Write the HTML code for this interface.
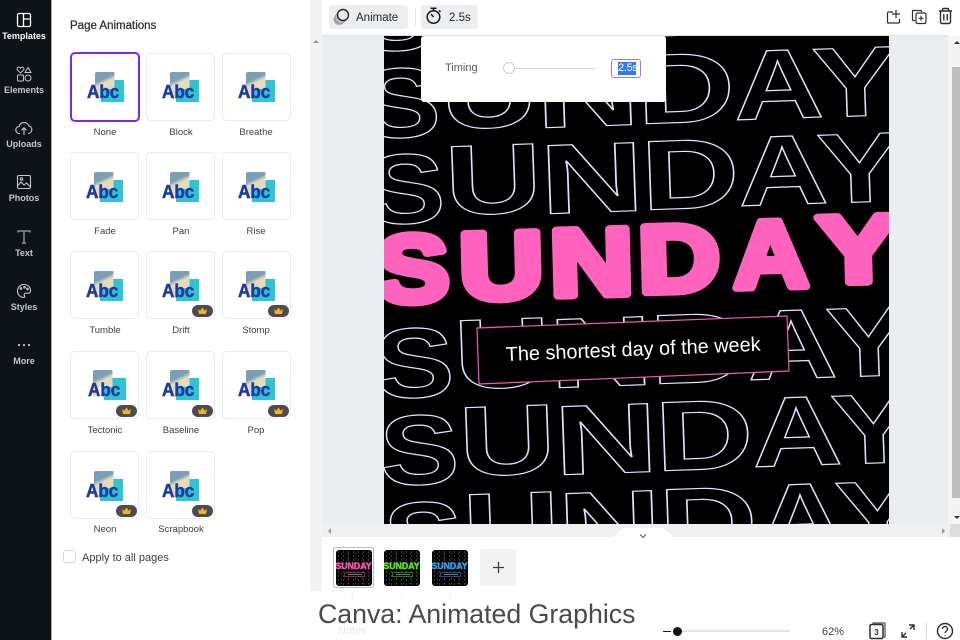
<!DOCTYPE html>
<html lang="en">
<head>
<meta charset="utf-8">
<title>Canva: Animated Graphics</title>
<style>
*{box-sizing:border-box}
html,body{margin:0;padding:0}
body{width:960px;height:640px;overflow:hidden;position:relative;background:#fff;font-family:"Liberation Sans",sans-serif;color:#24282e}
.abs{position:absolute}
#side{left:0;top:0;width:52px;height:640px;background:#0e1318;border-right:1px solid #a9a9a9}
.nav{position:absolute;left:0;width:48px;text-align:center;font-size:9px;font-weight:bold;color:#c4c7ca;line-height:11px;white-space:nowrap}
.nav svg{display:block;margin:0 auto 3px}
.card{position:absolute;width:69px;height:68px;border:1.5px solid #ebebed;border-radius:5px;background:#fff}
.card.sel{border:2px solid #7d2ae8}
.lbl{position:absolute;width:84px;text-align:center;font-size:9.5px;color:#3c4046;line-height:12px}
.pic{position:absolute;left:23px;top:17.5px;width:19.5px;height:27px;border-radius:2px;background:linear-gradient(155deg,#7b9fb7 0 30%,#e6dcb9 42% 100%);clip-path:polygon(0 0,100% 0,100% 65%,30% 65%,30% 100%,0 100%)}
.teal{position:absolute;left:29px;top:25.5px;width:22.500px;height:22.500px;background:#2fc4d2}
.abc{position:absolute;left:14.500px;top:28.300px;font-size:18px;font-weight:bold;color:#1a3aa5;line-height:20px;-webkit-text-stroke:.5px #1a3aa5;transform:scaleX(.95);transform-origin:0 0}
.d .pic,.d .teal,.d .abc{margin-top:1px}
.pill{position:absolute;right:1.500px;bottom:1.500px;width:21px;height:12px;border-radius:6px;background:#4c4c50}
.pill svg{position:absolute;left:5px;top:2px}
.thumb{position:absolute;top:550px;width:36px;height:36px;border-radius:3px;background-color:#050505;background-image:radial-gradient(circle,#6f6f6f 0 .5px,transparent .7px),radial-gradient(circle,#555 0 .45px,transparent .7px);background-size:5px 4px,7px 5px;background-position:0 0,2px 1px;overflow:hidden;text-align:center}
.thumb b{position:absolute;left:-1px;width:38px;top:12px;font-size:8.8px;line-height:9px;font-weight:bold;-webkit-text-stroke:.45px currentColor}
.thumb i{position:absolute;left:8px;top:22px;width:21px;height:5px;background:#000;border:.5px solid currentColor;opacity:.75}
.thumb i:after{content:"";position:absolute;left:3px;top:1.300px;width:14px;height:1px;background:#999}
.num{position:absolute;top:591px;font-size:9px;color:#eef0f2}
</style>
</head>
<body>

<div class="abs" style="left:310px;top:0;width:12px;height:591px;background:#f3f3f3"></div>
<div class="abs" style="left:322px;top:0;width:638px;height:35px;background:#fff"></div>
<div class="abs" style="left:322px;top:35px;width:626px;height:489px;background:#ebeef1;border-top:1px solid #dfe1e3"></div>

<svg class="abs" style="left:384px;top:36px" width="505" height="488" viewBox="384 36 505 488">
<rect x="384" y="36" width="505" height="488" fill="#000"/>
<g font-family="Liberation Sans" font-weight="bold" font-size="99" fill="none" stroke="#e6e0ff" stroke-width="1.2">
<g transform="translate(-9,-173)" aria-label="SUNDAY">
<text transform="translate(367,224.500) rotate(-2) scale(1.2,1)">S</text><text transform="translate(446,215) rotate(-2) scale(1.36,1)">U</text><text transform="translate(541,214) rotate(-2) scale(1.46,1)">N</text><text transform="translate(642,210) rotate(-2) scale(1.38,1)">D</text><text transform="translate(739,206) rotate(-2) scale(1.26,1)">A</text><text transform="translate(818,203.500) rotate(-2) scale(1.3,1)">Y</text>
</g>
<g transform="translate(-4.5,-86)" aria-label="SUNDAY">
<text transform="translate(367,224.500) rotate(-2) scale(1.2,1)">S</text><text transform="translate(446,215) rotate(-2) scale(1.36,1)">U</text><text transform="translate(541,214) rotate(-2) scale(1.46,1)">N</text><text transform="translate(642,210) rotate(-2) scale(1.38,1)">D</text><text transform="translate(739,206) rotate(-2) scale(1.26,1)">A</text><text transform="translate(818,203.500) rotate(-2) scale(1.3,1)">Y</text>
</g>
<g aria-label="SUNDAY">
<text transform="translate(367,224.500) rotate(-2) scale(1.2,1)">S</text><text transform="translate(446,215) rotate(-2) scale(1.36,1)">U</text><text transform="translate(541,214) rotate(-2) scale(1.46,1)">N</text><text transform="translate(642,210) rotate(-2) scale(1.38,1)">D</text><text transform="translate(739,206) rotate(-2) scale(1.26,1)">A</text><text transform="translate(818,203.500) rotate(-2) scale(1.3,1)">Y</text>
</g>
<g transform="translate(9,174)" aria-label="SUNDAY">
<text transform="translate(367,224.500) rotate(-2) scale(1.2,1)">S</text><text transform="translate(446,215) rotate(-2) scale(1.36,1)">U</text><text transform="translate(541,214) rotate(-2) scale(1.46,1)">N</text><text transform="translate(642,210) rotate(-2) scale(1.38,1)">D</text><text transform="translate(739,206) rotate(-2) scale(1.26,1)">A</text><text transform="translate(818,203.500) rotate(-2) scale(1.3,1)">Y</text>
</g>
<g transform="translate(14,261)" aria-label="SUNDAY">
<text transform="translate(367,224.500) rotate(-2) scale(1.2,1)">S</text><text transform="translate(446,215) rotate(-2) scale(1.36,1)">U</text><text transform="translate(541,214) rotate(-2) scale(1.46,1)">N</text><text transform="translate(642,210) rotate(-2) scale(1.38,1)">D</text><text transform="translate(739,206) rotate(-2) scale(1.26,1)">A</text><text transform="translate(818,203.500) rotate(-2) scale(1.3,1)">Y</text>
</g>
<g transform="translate(18,348)" aria-label="SUNDAY">
<text transform="translate(367,224.500) rotate(-2) scale(1.2,1)">S</text><text transform="translate(446,215) rotate(-2) scale(1.36,1)">U</text><text transform="translate(541,214) rotate(-2) scale(1.46,1)">N</text><text transform="translate(642,210) rotate(-2) scale(1.38,1)">D</text><text transform="translate(739,206) rotate(-2) scale(1.26,1)">A</text><text transform="translate(818,203.500) rotate(-2) scale(1.3,1)">Y</text>
</g>
</g>
<g font-family="Liberation Sans" font-weight="bold" font-size="95" fill="#ff63bd" stroke="#ff63bd" stroke-width="8" stroke-linejoin="round" aria-label="SUNDAY">
<text transform="translate(377,302.5) rotate(-1.5) scale(1.15,1)">S</text><text transform="translate(460,299.5) rotate(-1.5) scale(1.23,1)">U</text><text transform="translate(550.6,296) rotate(-1.5) scale(1.22,1)">N</text><text transform="translate(639,292.500) rotate(-1.5) scale(1.19,1)">D</text><text transform="translate(734,288) rotate(-1.5) scale(1.09,1)">A</text><text transform="translate(818,283) rotate(-1.5) scale(1.29,1)">Y</text>
</g>
<polygon points="477,328 787,316 789,371 479,384" fill="#000" stroke="#f05bb4" stroke-width="1.2"/>
<text x="506" y="361" transform="rotate(-2.3 506 361)" font-family="Liberation Sans" font-size="20" fill="#fff" textLength="255" lengthAdjust="spacingAndGlyphs">The shortest day of the week</text>
</svg>

<!-- popover -->
<div class="abs" style="left:421px;top:36px;width:245px;height:66px;background:#fff;border-radius:3px"></div>
<div class="abs" style="left:445px;top:61px;font-size:11px;line-height:14px;color:#55585c">Timing</div>
<div class="abs" style="left:503px;top:67.500px;width:93px;height:1px;background:#d9d3e2"></div>
<div class="abs" style="left:503px;top:62px;width:12px;height:12px;border-radius:50%;background:#fff;border:1px solid #cfcfd4"></div>
<div class="abs" style="left:611px;top:59px;width:30px;height:19px;border:1.500px solid #a675f0;border-radius:3px;background:#fff"></div>
<div class="abs" style="left:618px;top:62px;width:18px;height:13px;background:#2f7bf0;color:#fff;font-size:11px;line-height:13px;letter-spacing:-.3px;white-space:nowrap">2.5s</div>

<!-- top toolbar -->
<div class="abs" style="left:329px;top:5px;width:79px;height:24px;background:#eceef0;border-radius:3px"></div>
<svg class="abs" style="left:332px;top:7px" width="20" height="20" viewBox="0 0 20 20" fill="none"><circle cx="7" cy="12.500" r="5.500" fill="#a9a9a9"/><circle cx="8.500" cy="11" r="5.500" fill="#bdbdbd" stroke="#8c8c8c" stroke-width=".7"/><circle cx="11" cy="8" r="5.500" fill="#eceef0" stroke="#24282e" stroke-width="1.400"/></svg>
<div class="abs" style="left:356px;top:11px;font-size:11.500px;line-height:14px;color:#24282e">Animate</div>
<div class="abs" style="left:415px;top:8px;width:1px;height:18px;background:#e6e6e8"></div>
<div class="abs" style="left:421px;top:5px;width:57px;height:24px;background:#eceef0;border-radius:3px"></div>
<svg class="abs" style="left:424px;top:6px" width="20" height="20" viewBox="0 0 20 20" fill="none" stroke="#15181c" stroke-width="1.500"><circle cx="9.500" cy="11" r="6.300"/><path d="M6.500 2.200h6M9.500 2.200v2.500M9.500 11l-2.500-3M15 4.500l1.500 1.500"/></svg>
<div class="abs" style="left:449px;top:11px;font-size:11.500px;line-height:14px;color:#24282e">2.5s</div>
<svg class="abs" style="left:885px;top:6px" width="70" height="20" viewBox="0 0 70 20" fill="none" stroke="#2a2e34" stroke-width="1.200"><path d="M8 6H3.500a1 1 0 0 0-1 1v9a1 1 0 0 0 1 1h10a1 1 0 0 0 1-1v-3"/><path d="M11 4v8M7 8h8"/><path d="M30 14.500h-1.500a1 1 0 0 1-1-1v-8a1 1 0 0 1 1-1h7a1 1 0 0 1 1 1V6"/><rect x="31" y="7" width="10" height="10.500" rx="1.500"/><path d="M36 9.800v5M33.500 12.300h5" stroke-width="1.100"/><path d="M54 5h13M57.500 5V3.500a1 1 0 0 1 1-1h4a1 1 0 0 1 1 1V5M55.500 5v11a1.500 1.500 0 0 0 1.500 1.500h7a1.500 1.500 0 0 0 1.500-1.500V5M58.800 8v6.500M62.200 8v6.500" stroke-width="1.400"/></svg>

<!-- right scrollbar -->
<div class="abs" style="left:948px;top:36px;width:12px;height:488px;background:#f4f4f4"></div>
<div class="abs" style="left:952px;top:67px;width:8px;height:431px;background:#bdbdbd"></div>
<div class="abs" style="left:953.500px;top:41px;width:0;height:0;border-left:3px solid transparent;border-right:3px solid transparent;border-bottom:3px solid #333"></div>
<div class="abs" style="left:953.500px;top:516px;width:0;height:0;border-left:3px solid transparent;border-right:3px solid transparent;border-top:3px solid #333"></div>
<div class="abs" style="left:313px;top:40px;width:0;height:0;border-left:3px solid transparent;border-right:3px solid transparent;border-bottom:3px solid #999"></div>

<!-- bottom scrollbar and thumb band -->
<div class="abs" style="left:322px;top:524px;width:638px;height:13px;background:#f0f0f0"></div>
<div class="abs" style="left:322px;top:537px;width:638px;height:54px;background:#fff"></div>
<div class="abs" style="left:950px;top:524px;width:10px;height:13px;background:#dcdcdc"></div>
<svg class="abs" style="left:610px;top:524px" width="68" height="14" viewBox="0 0 68 14"><path d="M0 14C6 14 8 4 16 4H50C58 4 60 14 68 14Z" fill="#fff"/></svg>
<div class="abs" style="left:328px;top:528px;width:0;height:0;border-top:3px solid transparent;border-bottom:3px solid transparent;border-right:3px solid #999"></div>
<div class="abs" style="left:942px;top:528px;width:0;height:0;border-top:3px solid transparent;border-bottom:3px solid transparent;border-left:3px solid #999"></div>
<svg class="abs" style="left:639px;top:533px" width="8" height="6" viewBox="0 0 8 6" fill="none" stroke="#555" stroke-width="1"><path d="M1 1.500l3 3 3-3"/></svg>

<div class="abs" style="left:333px;top:547px;width:41px;height:41px;border:1.500px solid #b7b9bd;border-radius:3px;background:#fff"></div>
<div class="thumb" style="left:335.500px"><b style="color:#ff4fb8">SUNDAY</b><i style="color:#a5367c"></i></div>
<div class="thumb" style="left:383.500px"><b style="color:#5ae614">SUNDAY</b><i style="color:#3c9a10"></i></div>
<div class="thumb" style="left:431.500px"><b style="color:#2f9cf0">SUNDAY</b><i style="color:#2765b5"></i></div>
<div class="abs" style="left:480px;top:549px;width:36px;height:37px;background:#f2f2f3;border-radius:3px"></div>
<svg class="abs" style="left:491px;top:560px" width="15" height="15" viewBox="0 0 15 15" stroke="#3a3e44" stroke-width="1.300"><path d="M7.500 2v11M2 7.500h11"/></svg>

<!-- bottom band -->
<div class="abs" style="left:310px;top:591px;width:650px;height:49px;background:#fff"></div>
<div class="num" style="left:350px">1</div>
<div class="num" style="left:399px">2</div>
<div class="num" style="left:447px">3</div>
<div class="abs" style="left:338px;top:624px;font-size:11px;line-height:14px;color:#e6e8eb">Notes</div>
<div class="abs" style="left:318px;top:597px;font-size:26.700px;line-height:34px;color:#4a4a4a;white-space:nowrap">Canva: Animated Graphics</div>

<div class="abs" style="left:663px;top:630.500px;width:8px;height:1.500px;background:#15181c"></div>
<div class="abs" style="left:676px;top:630px;width:114px;height:2px;background:#e4e4ea"></div>
<div class="abs" style="left:672.500px;top:627px;width:9px;height:9px;border-radius:50%;background:#0e1318"></div>
<div class="abs" style="left:822px;top:625px;font-size:11px;line-height:14px;color:#3c4046">62%</div>
<svg class="abs" style="left:868px;top:621px" width="88" height="19" viewBox="0 0 88 19" fill="none" stroke="#2a2e34"><path d="M5 3V2h11a1 1 0 0 1 1 1v13h-1" stroke-width="1"/><rect x="2" y="3.500" width="13" height="14" rx="1.500" stroke-width="1.500"/><text x="8.500" y="14" font-family="Liberation Sans" font-size="8" font-weight="bold" fill="#2a2e34" stroke="none" text-anchor="middle">3</text><path d="M41 4h5v5M46 4l-4 4M34 11v5h5M34 16l4-4" stroke-width="1.400"/><path d="M58.500 1.500v17" stroke="#dcdce0" stroke-width="1"/><circle cx="77" cy="10" r="7.500" stroke-width="1.400"/><path d="M74.500 8a2.500 2.500 0 1 1 3.800 2.100c-.9.600-1.300 1-1.300 2" stroke-width="1.300"/><circle cx="77" cy="14.500" r=".6" fill="#2a2e34" stroke="none"/></svg>

<!-- sidebar -->
<div class="abs" id="side">
<div class="nav" style="top:12px;color:#fff"><svg width="16" height="16" viewBox="0 0 16 16" fill="none" stroke="#fff" stroke-width="1.300"><rect x="1.500" y="1.500" width="13" height="13" rx="1.500"/><path d="M7.500 1.500v13M7.500 7h7"/></svg>Templates</div>
<div class="nav" style="top:66px"><svg width="17" height="16" viewBox="0 0 17 16" fill="none" stroke="#c4c7ca" stroke-width="1"><path d="M4.500 7L1.200 3.800a1.800 1.800 0 0 1 3.300-1.600 1.800 1.800 0 0 1 3.300 1.600zM12 1.500l3 5H9z"/><rect x="1.500" y="9" width="6" height="6" rx=".7"/><circle cx="12" cy="12" r="3"/></svg>Elements</div>
<div class="nav" style="top:120px"><svg width="18" height="16" viewBox="0 0 18 16" fill="none" stroke="#c4c7ca" stroke-width="1.100"><path d="M5 13.500H4.500a3.500 3.500 0 0 1-.4-7 5 5 0 0 1 9.700-.5 3.800 3.800 0 0 1-.3 7.500H13M9 15V8M6.500 10.300L9 7.800l2.500 2.500"/></svg>Uploads</div>
<div class="nav" style="top:174px"><svg width="16" height="16" viewBox="0 0 16 16" fill="none" stroke="#c4c7ca" stroke-width="1.100"><rect x="1.500" y="1.500" width="13" height="13" rx="1.500"/><path d="M1.500 12l3.500-4 3 3 2.500-2 4 4"/><circle cx="5.500" cy="5" r="1.200"/></svg>Photos</div>
<div class="nav" style="top:229px"><svg width="16" height="16" viewBox="0 0 16 16" fill="none" stroke="#c4c7ca" stroke-width="1"><path d="M2 3.500V2h12v1.500M8 2v12M6 14h4"/></svg>Text</div>
<div class="nav" style="top:283px"><svg width="16" height="16" viewBox="0 0 16 16" fill="none" stroke="#c4c7ca" stroke-width="1.100"><path d="M8.500 1.500a6.500 6.500 0 1 0-1 13c1.500 0 1.200-1.500.8-2.300-.5-1 .2-2 1.400-2H12c1.500 0 2.500-1 2.500-2.700 0-3.200-2.700-6-6-6z"/><circle cx="5" cy="5.500" r=".8"/><circle cx="8.500" cy="4.300" r=".8"/><circle cx="11.500" cy="6" r=".8"/></svg>Styles</div>
<div class="nav" style="top:337px"><svg width="16" height="16" viewBox="0 0 16 16" fill="#c4c7ca"><circle cx="3" cy="8" r="1.100"/><circle cx="8" cy="8" r="1.100"/><circle cx="13" cy="8" r="1.100"/></svg>More</div>
</div>

<!-- panel -->
<div class="abs" style="left:70px;top:19px;font-size:11.500px;line-height:15px;color:#2a2e34;-webkit-text-stroke:.25px #2a2e34">Page Animations</div>

<div class="card sel" style="left:70px;top:52px;width:70px;height:70px"><div class="teal"></div><div class="pic"></div><div class="abc">Abc</div></div>
<div class="card" style="left:146px;top:53px"><div class="teal"></div><div class="pic"></div><div class="abc">Abc</div></div>
<div class="card" style="left:222px;top:53px"><div class="teal"></div><div class="pic"></div><div class="abc">Abc</div></div>
<div class="lbl" style="left:63px;top:127px">None</div>
<div class="lbl" style="left:139px;top:127px">Block</div>
<div class="lbl" style="left:214px;top:127px">Breathe</div>

<div class="card d" style="left:70px;top:152px"><div class="teal"></div><div class="pic"></div><div class="abc">Abc</div></div>
<div class="card d" style="left:146px;top:152px"><div class="teal"></div><div class="pic"></div><div class="abc">Abc</div></div>
<div class="card d" style="left:222px;top:152px"><div class="teal"></div><div class="pic"></div><div class="abc">Abc</div></div>
<div class="lbl" style="left:63px;top:226px">Fade</div>
<div class="lbl" style="left:139px;top:226px">Pan</div>
<div class="lbl" style="left:214px;top:226px">Rise</div>

<div class="card d" style="left:70px;top:251px"><div class="teal"></div><div class="pic"></div><div class="abc">Abc</div></div>
<div class="card d" style="left:146px;top:251px"><div class="teal"></div><div class="pic"></div><div class="abc">Abc</div><div class="pill"><svg width="11" height="8" viewBox="0 0 11 8"><path d="M1 2l2.200 1.800L5.500.5l2.300 3.300L10 2 9 7H2z" fill="#f5b21b"/></svg></div></div>
<div class="card d" style="left:222px;top:251px"><div class="teal"></div><div class="pic"></div><div class="abc">Abc</div><div class="pill"><svg width="11" height="8" viewBox="0 0 11 8"><path d="M1 2l2.200 1.800L5.500.5l2.300 3.300L10 2 9 7H2z" fill="#f5b21b"/></svg></div></div>
<div class="lbl" style="left:63px;top:325px">Tumble</div>
<div class="lbl" style="left:139px;top:325px">Drift</div>
<div class="lbl" style="left:214px;top:325px">Stomp</div>

<div class="card" style="left:70px;top:351px"><div class="teal" style="left:33px;width:22px"></div><div class="pic" style="left:22px"></div><div class="abc" style="left:17px">Abc</div><div class="pill"><svg width="11" height="8" viewBox="0 0 11 8"><path d="M1 2l2.200 1.800L5.500.5l2.300 3.300L10 2 9 7H2z" fill="#f5b21b"/></svg></div></div>
<div class="card" style="left:146px;top:351px"><div class="teal"></div><div class="pic"></div><div class="abc">Abc</div><div class="pill"><svg width="11" height="8" viewBox="0 0 11 8"><path d="M1 2l2.200 1.800L5.500.5l2.300 3.300L10 2 9 7H2z" fill="#f5b21b"/></svg></div></div>
<div class="card" style="left:222px;top:351px"><div class="teal"></div><div class="pic"></div><div class="abc">Abc</div><div class="pill"><svg width="11" height="8" viewBox="0 0 11 8"><path d="M1 2l2.200 1.800L5.500.5l2.300 3.300L10 2 9 7H2z" fill="#f5b21b"/></svg></div></div>
<div class="lbl" style="left:63px;top:425px">Tectonic</div>
<div class="lbl" style="left:139px;top:425px">Baseline</div>
<div class="lbl" style="left:214px;top:425px">Pop</div>

<div class="card d" style="left:70px;top:451px"><div class="teal"></div><div class="pic"></div><div class="abc">Abc</div><div class="pill"><svg width="11" height="8" viewBox="0 0 11 8"><path d="M1 2l2.200 1.800L5.500.5l2.300 3.300L10 2 9 7H2z" fill="#f5b21b"/></svg></div></div>
<div class="card d" style="left:146px;top:451px"><div class="teal"></div><div class="pic"></div><div class="abc">Abc</div><div class="pill"><svg width="11" height="8" viewBox="0 0 11 8"><path d="M1 2l2.200 1.800L5.500.5l2.300 3.300L10 2 9 7H2z" fill="#f5b21b"/></svg></div></div>
<div class="lbl" style="left:63px;top:524px">Neon</div>
<div class="lbl" style="left:139px;top:524px">Scrapbook</div>

<div class="abs" style="left:63px;top:550px;width:13px;height:13px;border:1.500px solid #d6d7da;border-radius:3px;background:#fff"></div>
<div class="abs" style="left:82px;top:551px;font-size:11px;line-height:14px;color:#3c4046">Apply to all pages</div>

</body>
</html>
